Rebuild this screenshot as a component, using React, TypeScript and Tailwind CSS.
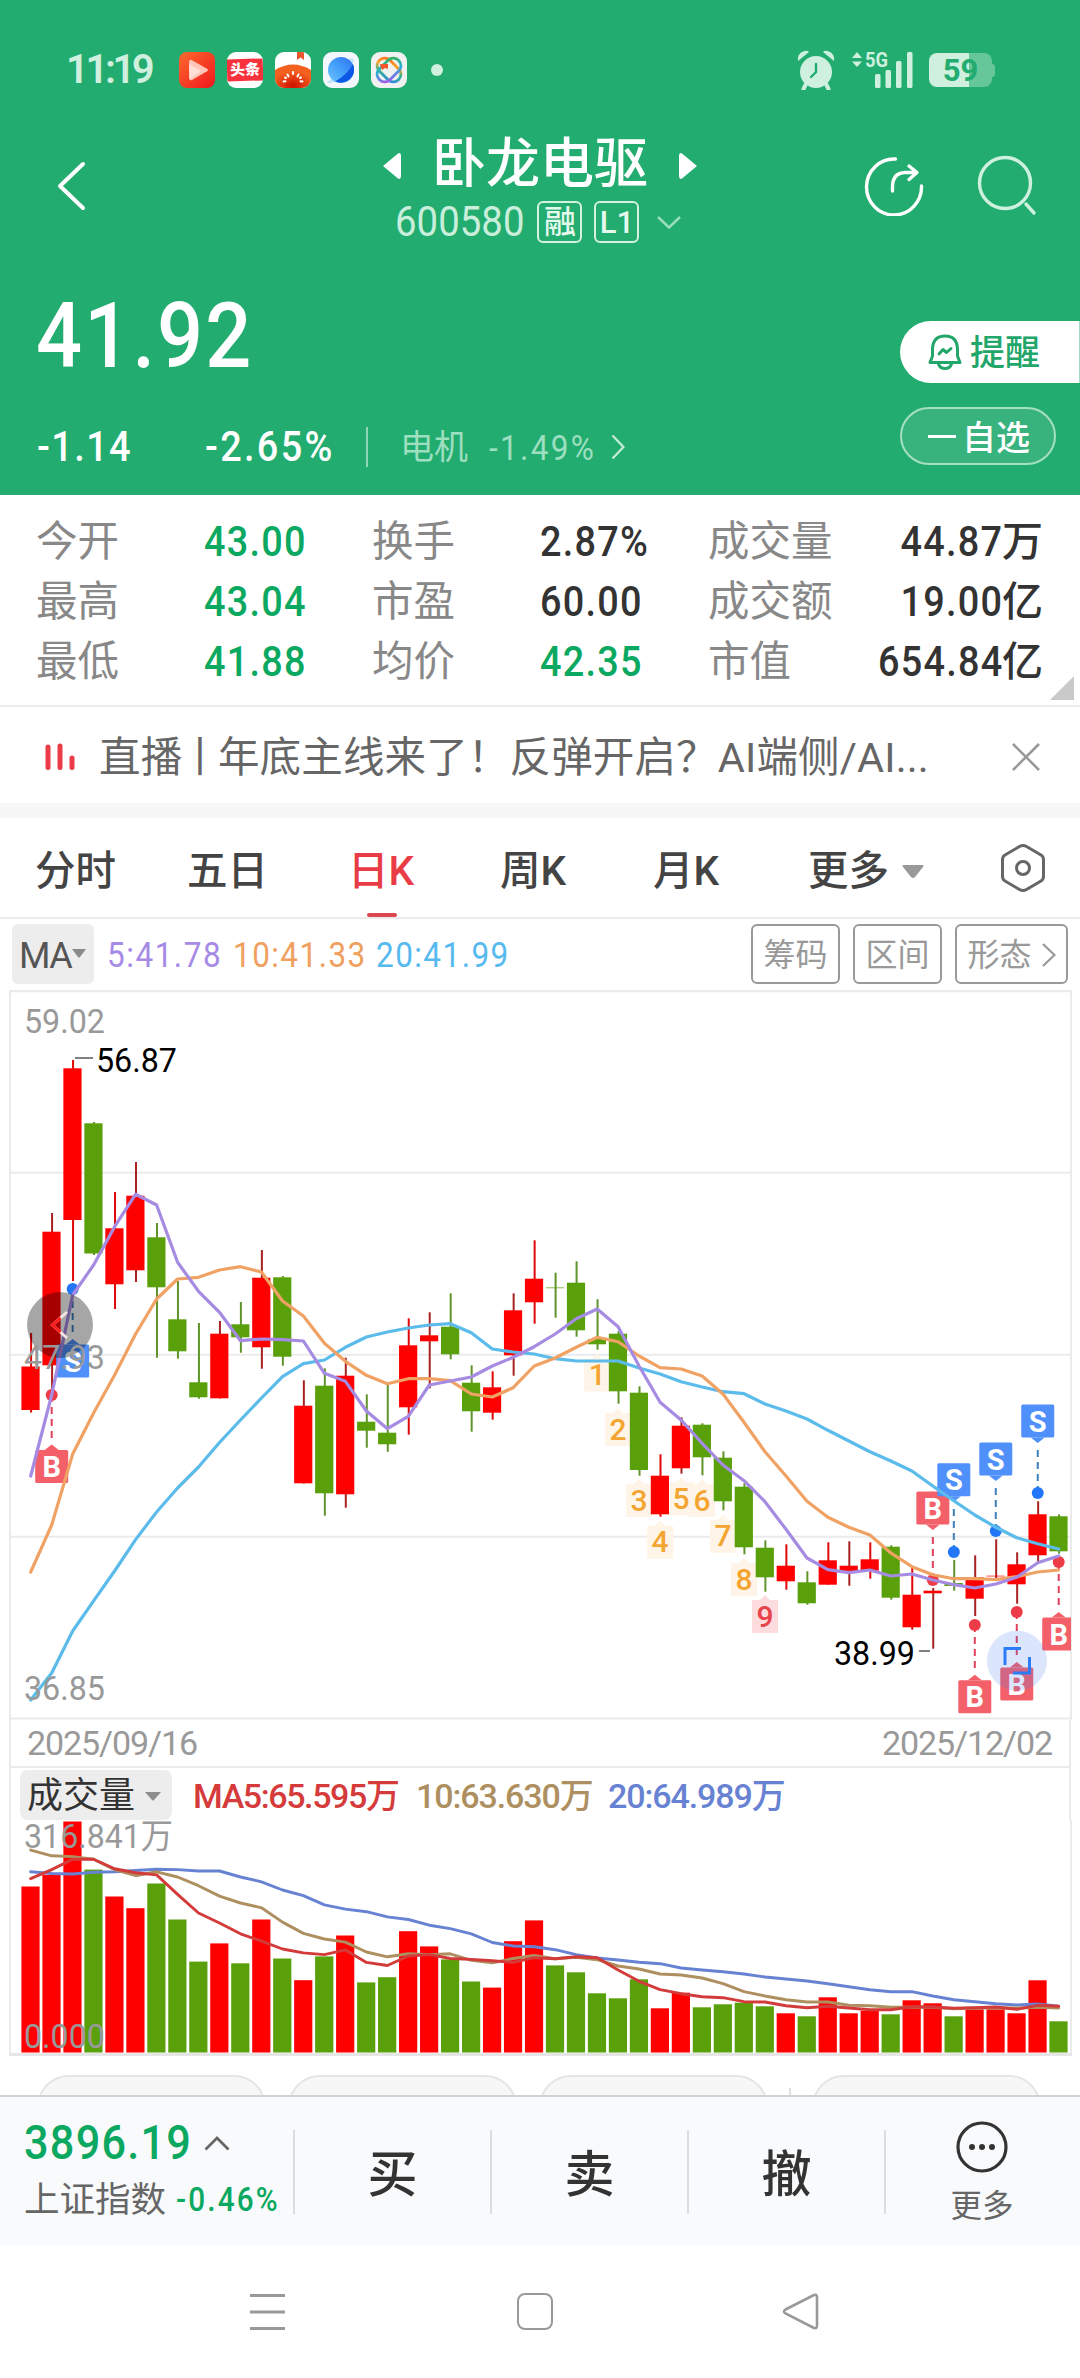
import React from "react";

const FONT = "font-['Roboto','Noto_Sans_CJK_SC',sans-serif]";
const SVG_FONT = "Roboto, 'Noto Sans CJK SC', sans-serif";

const RED = "#ff0000";
const GREEN = "#5aa00a";

/* [up, bodyTop, bodyBottom, wickTop, wickBottom, volumeTop] */
type Candle = [number, number, number, number, number, number];

const candles: Candle[] = [
  [1, 1366.5, 1410, 1333, 1412.5, 1886.5],
  [1, 1231.7, 1365.3, 1213, 1393, 1874.8],
  [1, 1068.3, 1220, 1060, 1281, 1821.5],
  [0, 1123.3, 1253.5, 1122, 1255, 1869.6],
  [1, 1228.3, 1284.3, 1192, 1309, 1896.5],
  [1, 1195.7, 1270.3, 1162, 1282, 1908.2],
  [0, 1237.3, 1287.3, 1223, 1357.7, 1883.5],
  [0, 1319.3, 1351.3, 1281, 1358.7, 1919.5],
  [0, 1382.3, 1397.3, 1323, 1398.7, 1961.6],
  [1, 1333.7, 1398.3, 1321, 1398.5, 1943.4],
  [0, 1324.3, 1337.3, 1302, 1352.7, 1963.3],
  [1, 1277.7, 1347.3, 1250, 1368.7, 1919.5],
  [0, 1277.3, 1356.7, 1276, 1365.7, 1958.5],
  [1, 1405.7, 1483.3, 1380.3, 1483.5, 1980.2],
  [0, 1385.7, 1493.3, 1368.3, 1515.7, 1956.4],
  [1, 1375.7, 1494.3, 1357.7, 1507.7, 1935.5],
  [0, 1421.7, 1430.7, 1394.3, 1447.7, 1982.4],
  [0, 1432.7, 1444.3, 1385, 1451.7, 1977.2],
  [1, 1345.3, 1407.3, 1318.3, 1434.7, 1931.2],
  [1, 1335.3, 1341.3, 1312.3, 1388.3, 1946.4],
  [0, 1326.7, 1354.3, 1293.3, 1359.3, 1959.4],
  [0, 1382.7, 1411.3, 1365.3, 1431.7, 1981.5],
  [1, 1387.3, 1412.7, 1371.3, 1419.7, 1987.6],
  [1, 1310.3, 1355.3, 1293.3, 1375.7, 1941.2],
  [1, 1278.7, 1302.3, 1240.3, 1323.7, 1920.4],
  [0, 1287, 1288.4, 1272.7, 1317.7, 1965.4],
  [0, 1282.7, 1330.3, 1261.3, 1336.7, 1972.3],
  [0, 1339, 1344.3, 1299.3, 1349.7, 1993.3],
  [0, 1333.7, 1391.3, 1331.3, 1403.7, 1998.3],
  [0, 1392.7, 1470, 1386.3, 1475.7, 1979.3],
  [1, 1475.7, 1514.3, 1454.3, 1516.7, 2008.3],
  [1, 1425.7, 1468.3, 1417.3, 1473.7, 1992.7],
  [0, 1424.7, 1457.3, 1423.3, 1475.3, 2007.3],
  [0, 1457.7, 1501.3, 1451.3, 1510.3, 2004.3],
  [0, 1486.7, 1547.3, 1483.3, 1554.3, 2002.7],
  [0, 1547.7, 1577.3, 1540.3, 1591.7, 2006.3],
  [1, 1565.7, 1581.3, 1544.3, 1589.7, 2013.3],
  [0, 1582.3, 1603.3, 1571.3, 1604.7, 2016.3],
  [1, 1560.3, 1584.7, 1542.3, 1584.7, 1997.3],
  [1, 1565.7, 1572.3, 1541.3, 1585.7, 2013.3],
  [1, 1559.3, 1570.7, 1542.3, 1578.7, 2010.7],
  [0, 1546.7, 1597.7, 1545.3, 1599.7, 2014.3],
  [1, 1594.7, 1627.3, 1566.7, 1629.7, 2000.3],
  [1, 1590.7, 1593.3, 1588, 1648.7, 2003.3],
  [0, 1583, 1586, 1560, 1590.7, 2016.3],
  [1, 1577.3, 1598.7, 1555.3, 1616, 2009.3],
  [1, 1575.4, 1576.8, 1539.3, 1578.7, 2009.3],
  [1, 1564.3, 1584.3, 1552.3, 1603.7, 2013.3],
  [1, 1514.3, 1555.3, 1501.3, 1561.7, 1980.3],
  [0, 1516.3, 1551.3, 1514.3, 1553.7, 2021.3],
];

const ma5 = [1476, 1395, 1295, 1265, 1226.7, 1194.3, 1205, 1262.3, 1291.3, 1312.3, 1340.7, 1339, 1339.7, 1341, 1373.3, 1381.3, 1411, 1428.7, 1416.3, 1385, 1381, 1377, 1366, 1357.3, 1346.7, 1334, 1318.7, 1309, 1326.7, 1366, 1402.3, 1420, 1443.3, 1465, 1480.7, 1501.7, 1529.3, 1558, 1569.7, 1572.7, 1570, 1576, 1574, 1580, 1584.7, 1588, 1584, 1577.3, 1562.7, 1556];
const ma10 = [1572, 1525, 1454, 1413, 1375, 1334, 1299, 1279, 1277.3, 1270, 1266.7, 1272, 1301, 1316, 1343.3, 1361.3, 1375.3, 1383.7, 1378.7, 1378.7, 1380.7, 1394, 1397, 1387.7, 1366, 1358, 1347.3, 1337.3, 1341.7, 1356, 1367.7, 1369, 1376, 1394, 1422.3, 1451.7, 1476, 1501.3, 1517.3, 1527.3, 1535, 1553, 1566.7, 1574.7, 1578.7, 1578.7, 1579.7, 1576.7, 1572, 1570];
const ma20 = [1700, 1673, 1631, 1600.8, 1571, 1539.6, 1512, 1488, 1467, 1442.5, 1420, 1398, 1376.7, 1363.7, 1360, 1347.3, 1337, 1332, 1328, 1325, 1323.7, 1332.7, 1349, 1352, 1354, 1358.7, 1361, 1361, 1361, 1368, 1374, 1381.7, 1387, 1391.7, 1393.7, 1404, 1411, 1419, 1430.3, 1441, 1451.7, 1461, 1471, 1486, 1500.7, 1515, 1527.3, 1537.7, 1543.7, 1549];
const vol5 = [1878.7, 1869.6, 1859.2, 1859.2, 1868.8, 1872.7, 1874.9, 1894.4, 1913, 1923, 1933.8, 1941.2, 1949, 1952.9, 1954.6, 1949.9, 1962.4, 1965.5, 1956, 1954.6, 1958.5, 1959.4, 1960.7, 1962.4, 1957.7, 1958.7, 1956.7, 1957.7, 1970, 1981.3, 1989.7, 1993.7, 1996.7, 1997.7, 2001.7, 2002, 2005.7, 2007.7, 2006.3, 2008, 2009.7, 2009.7, 2006.7, 2007, 2008.3, 2007.7, 2007, 2009.3, 2005.3, 2006.3];
const vol10 = [1850.1, 1855.8, 1856.6, 1859.2, 1869.6, 1875.7, 1871.8, 1877, 1885.7, 1896.1, 1903, 1907.8, 1922.1, 1933.4, 1939, 1942.1, 1952, 1956.8, 1953.8, 1954.6, 1953.8, 1960.3, 1962.9, 1958.5, 1955.5, 1958.7, 1957.3, 1959.7, 1966, 1969, 1974, 1975, 1978, 1983.7, 1991.7, 1996, 1999.7, 2002, 2002, 2005.3, 2005.7, 2007.3, 2007.3, 2007.3, 2008.7, 2008, 2008, 2008, 2007.3, 2008];
const vol20 = [1871.8, 1873.5, 1874, 1872.2, 1871.8, 1870.5, 1869.2, 1869.6, 1871, 1871, 1877, 1881.8, 1890, 1895.7, 1904.8, 1909.1, 1911.7, 1916.9, 1919.5, 1925.2, 1928.6, 1933.8, 1942.5, 1946, 1946.8, 1949.7, 1954.7, 1958, 1960, 1962.3, 1963.7, 1968, 1970, 1971.7, 1974, 1977, 1979, 1981, 1983.7, 1986.7, 1989.7, 1991.7, 1991.7, 1996, 1999.7, 2001.7, 2003.7, 2005, 2004, 2006.3];

const cx = (i: number) => 30.7 + 20.98 * i;
const line = (ys: number[]) => ys.map((y, i) => `${cx(i).toFixed(1)},${y}`).join(" ");

function ChartText({ x, y, w, size = 34, fill = "#999", children, weight = 400 }: { x: number; y: number; w: number; size?: number; fill?: string; weight?: number; children: string }) {
  return (
    <text x={x} y={y} fontSize={size} fill={fill} fontWeight={weight} textLength={w} lengthAdjust="spacingAndGlyphs" fontFamily={SVG_FONT}>
      {children}
    </text>
  );
}

/* Trade marker: a dot at the price, a dashed stem and a lettered tag. */
function Marker({ i, dot, box, kind }: { i: number; dot: number; box: number; kind: "B" | "S" }) {
  const x = cx(i);
  const tag = kind === "S" ? "#4f90fb" : "#f4606a";
  const below = box > dot;
  const edge = below ? box : box + 33;
  const d = below ? -1 : 1;
  return (
    <g>
      <line x1={x} x2={x} y1={dot} y2={edge + d * 10} stroke={kind === "S" ? "#3f7fb8" : "#e0405c"} strokeWidth="2" strokeDasharray="7 5" />
      <circle cx={x} cy={dot} r="6" fill={kind === "S" ? "#2276f7" : "#ee3b48"} />
      <rect x={x - 16.5} y={box} width="33" height="33" rx="1.5" fill={tag} />
      <path d={`M${x - 7} ${edge}L${x} ${edge + d * 5.5}L${x + 7} ${edge}z`} fill={tag} />
      <text x={x} y={box + 27} fontSize="29" fontWeight="700" fill="#fff" textAnchor="middle" fontFamily={SVG_FONT}>
        {kind}
      </text>
    </g>
  );
}

const counts: [number, number][] = [[27, 1374.5], [28, 1429], [29, 1500], [30, 1541.7], [31, 1498.3], [32, 1500], [33, 1535.7], [34, 1579], [35, 1616]];

function PriceChart() {
  return (
    <svg className="block" width="1080" height="730" viewBox="0 990 1080 730">
      <defs>
        <clipPath id="plot"><rect x="10" y="990" width="1061" height="730" /></clipPath>
      </defs>
      <g stroke="#ebebeb" strokeWidth="2">
        <path d="M9 991H1072" strokeWidth="2.5" />
        <path d="M10 1172.7H1071M10 1354.7H1071M10 1536.7H1071M10 1718.5H1071M10 990V1720M1071 990V1720" />
      </g>
      <ChartText x={24} y={1033} w={81}>59.02</ChartText>
      {counts.map(([i, y], n) => (
        <path key={i} d={`M${cx(i) - 13} ${y - 16}h8l5 -5l5 5h8v33h-26z`} fill={n === 8 ? "#fddcde" : "#fff4e8"} />
      ))}
      {candles.map(([up, t, b, wt, wb], i) => (
        <g key={i} fill={up ? RED : GREEN}>
          <rect x={cx(i) - 0.6} y={wt} width="2" height={wb - wt} fill={up ? (i % 2 || i > 42 ? "#a82222" : "#e00808") : "#5f942a"} />
          <rect x={cx(i) - 9.3} y={t} width="18.2" height={b - t} opacity={b - t < 2 ? 0.5 : 1} />
        </g>
      ))}
      <g clipPath="url(#plot)">
        <Marker i={1} dot={1395} box={1450} kind="B" />
        <Marker i={2} dot={1289} box={1344.5} kind="S" />
        <Marker i={43} dot={1580} box={1491.5} kind="B" />
        <Marker i={44} dot={1552} box={1463.3} kind="S" />
        <Marker i={46} dot={1531} box={1442.5} kind="S" />
        <Marker i={48} dot={1493} box={1404.5} kind="S" />
        <Marker i={45} dot={1625} box={1680.3} kind="B" />
        <Marker i={47} dot={1612} box={1667.5} kind="B" />
        <Marker i={49} dot={1562} box={1617.5} kind="B" />
      </g>
      <g fill="none" strokeWidth="3.2" strokeLinejoin="round" strokeLinecap="round">
        <polyline points={line(ma20)} stroke="#5bbbeb" />
        <polyline points={line(ma10)} stroke="#f0a264" />
        <polyline points={line(ma5)} stroke="#a58be2" />
      </g>
      {counts.map(([i, y], n) => (
        <text key={i} x={cx(i)} y={y + 10.7} fontSize="30" fontWeight="500" textAnchor="middle" fill={n === 8 ? "#e8434b" : "#f3a431"} fontFamily={SVG_FONT}>
          {n + 1}
        </text>
      ))}
      <circle cx="60" cy="1325" r="33" fill="#000" fillOpacity="0.35" />
      <path d="M67 1312L52.5 1325L67 1338" fill="none" stroke="#f3e3e3" strokeWidth="3" />
      <path d="M60.5 1317.8L52.5 1325L60.5 1332.2" fill="none" stroke="#ff1c1c" strokeWidth="3" />
      <ChartText x={24} y={1369} w={81}>47.93</ChartText>
      <ChartText x={24} y={1700} w={81}>36.85</ChartText>
      <path d="M75 1058H93M919 1651H930" stroke="#808080" strokeWidth="2" />
      <ChartText x={96} y={1072} w={81} fill="#000">56.87</ChartText>
      <ChartText x={834} y={1665} w={81} fill="#000">38.99</ChartText>
      <circle cx="1017" cy="1660.7" r="30" fill="#4a7df0" fillOpacity="0.2" />
      <path d="M1021 1648.5H1005V1665M1013 1673H1029.500V1657" fill="none" stroke="#2b7cf5" strokeWidth="3" />
    </svg>
  );
}

function VolumeChart() {
  return (
    <svg className="block overflow-visible" width="1080" height="236" viewBox="0 1820 1080 236">
      <path d="M10 1820V2055M1071 1820V2055" stroke="#ebebeb" strokeWidth="2" />
      <path d="M9 2054.500H1072" stroke="#e6e6e6" strokeWidth="3" />
      {candles.map(([up, , , , , v], i) => (
        <rect key={i} x={cx(i) - 9.3} y={v} width="18.2" height={2052.5 - v} fill={up ? RED : GREEN} />
      ))}
      <g fill="none" strokeWidth="2.9" strokeLinejoin="round" strokeLinecap="round">
        <polyline points={line(vol20)} stroke="#6782d2" />
        <polyline points={line(vol10)} stroke="#ae8f5f" />
        <polyline points={line(vol5)} stroke="#d33a3a" />
      </g>
      <ChartText x={24} y={1848} w={149}>316.841万</ChartText>
      <ChartText x={24} y={2048} w={81}>0.000</ChartText>
    </svg>
  );
}

function StatusBar() {
  return (
    <div className="flex h-[36px] items-center text-[#cfefdf]">
      <span className="ml-[66px] w-[113px] text-[40px] leading-[36px] font-semibold tracking-[-3.4px]">11:19</span>
      <div className="flex gap-[12px]">
        <svg width="36" height="36" viewBox="0 0 36 36">
          <defs><linearGradient id="vid" x1="0" y1="0" x2="1" y2="1"><stop offset="0" stopColor="#fb6a2e" /><stop offset="1" stopColor="#f0161c" /></linearGradient></defs>
          <rect width="36" height="36" rx="8" fill="url(#vid)" />
          <path d="M10 9.500Q10.500 7 13 8.200L28 16.800Q30 18 28 19.200L13 28Q10.500 29 10 26.500z" fill="#ffc5b8" />
          <path d="M10 12L22 19L11 27z" fill="#ffded6" />
        </svg>
        <div className="flex h-[36px] w-[36px] items-center overflow-hidden rounded-[9px] bg-white">
          <div className="flex h-[22px] w-[36px] -rotate-2 items-center justify-center bg-[#f8323c] text-[15px] leading-none font-black text-white">头条</div>
        </div>
        <svg width="36" height="36" viewBox="0 0 36 36">
          <defs>
            <clipPath id="tom"><rect width="36" height="36" rx="9" /></clipPath>
            <radialGradient id="tomg" cx="0.5" cy="0.9" r="0.6"><stop offset="0" stopColor="#cf0f02" /><stop offset="1" stopColor="#f4601f" /></radialGradient>
          </defs>
          <g clipPath="url(#tom)">
            <rect width="36" height="36" fill="#fff" />
            <path d="M0 18Q18 7 36 18V36H0z" fill="url(#tomg)" />
            <path d="M22 0h7v8l-3.500-2.500L22 8z" fill="#e8572c" />
            <g stroke="#fff" strokeWidth="2" strokeLinecap="round"><path d="M18 20v2M12.500 22.500l1 2M23.500 22.500l-1 2M8.500 29.500l2-.2M27.500 29.500l-2-.2M10 25.500l1 .5M26 25.500l-1 .5" /></g>
          </g>
        </svg>
        <svg width="36" height="36" viewBox="0 0 36 36">
          <defs><linearGradient id="pl" x1="1" y1="0" x2="0" y2="1"><stop offset="0" stopColor="#2e6ff2" /><stop offset="0.5" stopColor="#429ff9" /><stop offset="1" stopColor="#6dc6ff" /></linearGradient></defs>
          <rect width="36" height="36" rx="9" fill="#f3f7fb" />
          <path d="M6 29Q3 31 6 31Q12 32 24 20Q32 10 30.500 7Q29 5 25 8z" fill="#bfe4fb" />
          <circle cx="18" cy="18" r="13" fill="url(#pl)" />
          <path d="M12 29.500Q24 23 30 12Q33 20 28 26Q21 33 12 29.500z" fill="#0c58e4" />
        </svg>
        <svg width="36" height="36" viewBox="0 0 36 36">
          <defs><linearGradient id="kn" x1="0" y1="0" x2="1" y2="1"><stop offset="0" stopColor="#ff6a2a" /><stop offset="0.35" stopColor="#f7a325" /><stop offset="0.6" stopColor="#33b58b" /><stop offset="1" stopColor="#2f7df0" /></linearGradient>
            <linearGradient id="kn2" x1="1" y1="0" x2="0" y2="1"><stop offset="0" stopColor="#35b24a" /><stop offset="0.5" stopColor="#2bb0d8" /><stop offset="1" stopColor="#b04df0" /></linearGradient></defs>
          <rect width="36" height="36" rx="9" fill="#f1f1f1" />
          <rect x="4.500" y="10.500" width="27" height="15" rx="7" transform="rotate(45 18 18)" fill="none" stroke="url(#kn)" strokeWidth="2.800" />
          <rect x="4.500" y="10.500" width="27" height="15" rx="7" transform="rotate(-45 18 18)" fill="none" stroke="url(#kn2)" strokeWidth="2.800" />
          <path d="M9 12h8v5l-3-1-3 2z" fill="#f2552c" />
        </svg>
      </div>
      <span className="ml-[24px] h-[12px] w-[12px] rounded-full bg-[#cfefdf]" />
      <svg className="ml-[354px]" width="38" height="40" viewBox="0 0 38 40" fill="#cfefdf">
        <circle cx="19" cy="22" r="16" />
        <path d="M1 11Q0 4 6 1.500Q10 0 12 2zM37 11Q38 4 32 1.500Q28 0 26 2z" />
        <path d="M9 34l-2.500 5M29 34l2.500 5" stroke="#cfefdf" strokeWidth="4" strokeLinecap="round" />
        <path d="M19 14v8l-5 5" fill="none" stroke="#22ac6f" strokeWidth="2.400" strokeLinecap="round" />
      </svg>
      <svg className="ml-[16px] overflow-visible" width="64" height="38" viewBox="0 0 64 38" fill="#cfefdf">
        <path d="M1 7L6 1l5 6zM1 10.500h10L6 16z" />
        <text x="14" y="16" fontSize="21" fontWeight="700" textLength="23" lengthAdjust="spacingAndGlyphs" fontFamily={SVG_FONT}>5G</text>
        <rect x="24" y="23" width="5.500" height="14" rx="1.500" />
        <rect x="34.500" y="19" width="5.500" height="18" rx="1.500" />
        <rect x="45" y="10" width="5.500" height="27" rx="1.500" />
        <rect x="56" y="1" width="5.500" height="36" rx="1.500" />
      </svg>
      <div className="ml-[14px] flex items-center">
        <div className="flex h-[34px] w-[63px] items-center justify-center rounded-[8px] bg-[linear-gradient(90deg,#cfefdf_0_63%,#66c79b_63%)] text-[31px] leading-none font-bold text-[#22ac6f]">59</div>
        <span className="h-[13px] w-[3px] rounded-r-[3px] bg-[#66c79b]" />
      </div>
    </div>
  );
}

function TitleBar() {
  return (
    <div className="mt-[34px] flex h-[132px]">
      <div className="w-[300px]">
        <svg className="mt-[38px] ml-[56px]" width="32" height="52" viewBox="0 0 32 52" fill="none" stroke="#fff" strokeWidth="4" strokeLinecap="round" strokeLinejoin="round"><path d="M27 4L4 26L27 48" /></svg>
      </div>
      <div className="flex w-[480px] flex-col items-center">
        <div className="mt-[15px] flex h-[64px] items-center text-white">
          <svg className="-mt-[6px]" width="18" height="28" viewBox="0 0 18 28" fill="#fff"><path d="M0 14L15 1.500Q18 0 18 4V24Q18 28 15 26.500z" /></svg>
          <span className="-mt-[8px] mr-[31px] ml-[31px] text-[54px] leading-[64px] font-medium">卧龙电驱</span>
          <svg className="-mt-[6px]" width="18" height="28" viewBox="0 0 18 28" fill="#fff"><path d="M18 14L3 1.500Q0 0 0 4V24Q0 28 3 26.500z" /></svg>
        </div>
        <div className="-ml-[4px] flex h-[42px] items-center text-[#c9efdc]">
          <span className="-mr-[1px] origin-left scale-x-90 text-[42.5px] leading-[42px] tracking-[0.1px]">600580</span>
          <span className="flex h-[42px] w-[45px] items-center justify-center rounded-[6px] border-2 border-[#d3f2e2] text-[32px] leading-none font-medium text-[#e4f8ee]">融</span>
          <span className="ml-[12px] flex h-[42px] w-[45px] items-center justify-center rounded-[6px] border-2 border-[#d3f2e2] text-[31px] leading-none font-medium text-[#e4f8ee]">L1</span>
          <svg className="ml-[18px]" width="24" height="13" viewBox="0 0 24 13" fill="none" stroke="#9addbd" strokeWidth="2.500"><path d="M1 1L12 11.500L23 1" /></svg>
        </div>
      </div>
      <div className="flex w-[300px] pt-[32px]">
        <svg className="ml-[84px]" width="62" height="62" viewBox="0 0 62 62" fill="none" stroke="#fff" strokeWidth="3.400" strokeLinecap="round" strokeLinejoin="round">
          <path d="M31.500 5A27.500 28 0 1 0 57.500 32" />
          <path d="M28.500 37V33Q28.500 19 41 18.500H52M45 12L53 18.500L45 25.500" />
        </svg>
        <svg className="ml-[51px]" width="62" height="62" viewBox="0 0 62 62" fill="none" stroke="#cdf0df" strokeWidth="3.400" strokeLinecap="round"><circle cx="28" cy="29" r="25.500" /><path d="M49 50L57 59" /></svg>
      </div>
    </div>
  );
}

function PriceHeader() {
  return (
    <div className="flex h-[241px] justify-between text-white">
      <div>
        <div className="mt-[33px] ml-[36px] h-[100px] w-[260px] origin-left scale-x-90 text-[90px] leading-[100px] font-medium tracking-[2.4px]">41.92</div>
        <div className="mt-[38px] flex h-[44px] items-center text-[42px] leading-[44px] font-medium">
          <span className="ml-[37px] w-[168px]"><span className="inline-block origin-left scale-x-90 tracking-[1.6px]">-1.14</span></span>
          <span className="w-[161px]"><span className="inline-block origin-left scale-x-90 tracking-[2.6px]">-2.65%</span></span>
          <span className="h-[40px] w-[2px] bg-white/50" />
          <span className="ml-[32px] w-[89px] text-[34px] font-normal text-[#9ddfc0]">电机</span>
          <span className="w-[122px]"><span className="inline-block origin-left scale-x-90 text-[35px] font-normal tracking-[2.6px] text-[#9ddfc0]">-1.49%</span></span>
          <svg width="14" height="26" viewBox="0 0 14 26" fill="none" stroke="#c4ecd8" strokeWidth="2.300"><path d="M1.500 1.500L12.500 13L1.500 24.500" /></svg>
        </div>
      </div>
      <div className="w-[180px] pt-[67px]">
        <div className="flex h-[62px] items-center rounded-l-full border-r border-[#a0dcc0] bg-white pl-[28px] text-[#22a66a]">
          <svg width="34" height="36" viewBox="0 0 34 36" fill="none" stroke="#22a66a" strokeWidth="3" strokeLinecap="round" strokeLinejoin="round">
            <path d="M4.500 22V15Q5 2 17 2Q29 2 29.500 15V22L32 28.500H2z" /><path d="M10.500 30Q12 34.500 17 34.500Q22 34.500 23.500 30M11 20L15 15.500L18.500 18.500L23 14.500" />
          </svg>
          <span className="mt-[3px] ml-[8px] text-[35px] leading-none font-medium">提醒</span>
        </div>
        <div className="mt-[24px] flex h-[58px] w-[156px] items-center rounded-full border-2 border-[#a5dfc4] bg-[#38b37d] pl-[26px] text-[34px] leading-none font-medium">
          <span className="mr-[6px] h-[3px] w-[28px] bg-white" /><span className="mt-[4px]">自选</span>
        </div>
      </div>
    </div>
  );
}

const rows: [string, string, string, string, string, string, string, boolean][] = [
  ["今开", "43.00", "换手", "2.87%", "成交量", "44.87", "万", false],
  ["最高", "43.04", "市盈", "60.00", "成交额", "19.00", "亿", false],
  ["最低", "41.88", "均价", "42.35", "市值", "654.84", "亿", true],
];

function Quotes() {
  const num = "inline-block origin-left scale-x-90 font-medium tracking-[1.4px]";
  return (
    <div className="relative h-[212px] border-b-2 border-[#ececec] pt-[17px]">
      {rows.map((r) => (
        <div key={r[0]} className="flex h-[60px] items-center pr-[37px] pl-[36px] text-[42px] leading-[60px] text-[#333]">
          <span className="w-[168px] text-[41.5px] text-[#888]">{r[0]}</span>
          <span className="w-[168px] text-[#0aa860]"><span className={num}>{r[1]}</span></span>
          <span className="w-[168px] text-[41.5px] text-[#888]">{r[2]}</span>
          <span className={r[7] ? "w-[168px] text-[#0aa860]" : "w-[168px]"}><span className={num}>{r[3]}</span></span>
          <span className="text-[41.5px] text-[#888]">{r[4]}</span>
          <span className="ml-auto origin-right scale-x-90 font-medium tracking-[1.4px]">{r[5]}</span>
          <span className="-ml-[1px] text-[41px] font-medium">{r[6]}</span>
        </div>
      ))}
      <svg className="absolute right-[6px] bottom-[5px]" width="24" height="24" viewBox="0 0 24 24"><path d="M24 0V24H0z" fill="#c9c9c9" /></svg>
    </div>
  );
}

function News() {
  return (
    <div className="flex h-[96px] items-center pt-[4px] pb-0">
      <svg className="ml-[45px]" width="31" height="28" viewBox="0 0 31 28" stroke="#ea3d48" strokeWidth="5" strokeLinecap="round"><path d="M3 4V24.500M15 3V24.500M27 15V24.500" /></svg>
      <span className="mt-[2px] ml-[23px] w-[857px] text-[41.5px] leading-[60px] tracking-[0.15px] whitespace-nowrap text-[#666]">直播<span className="-mx-[3px]">丨</span>年底主线来了！反弹开启？AI端侧/AI...</span>
      <svg className="ml-[56px]" width="28" height="28" viewBox="0 0 28 28" stroke="#999" strokeWidth="2.600"><path d="M1 1L27 27M27 1L1 27" /></svg>
    </div>
  );
}

function Tabs() {
  return (
    <div className="relative flex h-[101px] items-center border-b-2 border-[#ebebeb] pt-[7px] text-[40.5px] leading-[60px] font-medium text-[#444]">
      <span className="ml-[35px] w-[152px]">分时</span>
      <span className="w-[161px]">五日</span>
      <span className="w-[152px] text-[#e93c47]">日K</span>
      <span className="w-[153px]">周K</span>
      <span className="w-[155px]">月K</span>
      <span>更多</span>
      <svg className="ml-[13px]" width="22" height="13" viewBox="0 0 22 13" fill="#999"><path d="M1 0H21Q22 1 21 2L13 12Q11 14 9 12L1 2Q0 1 1 0z" /></svg>
      <svg className="ml-[76px] -mt-[6px]" width="46" height="50" viewBox="0 0 46 50" fill="none" stroke="#666" strokeWidth="3" strokeLinejoin="round"><path d="M19.500 3.500Q23 1.500 26.500 3.500L41 12Q43.500 13.500 43.500 16.500V33.500Q43.500 36.500 41 38L26.500 46.500Q23 48.500 19.500 46.500L5 38Q2.500 36.500 2.500 33.500V16.500Q2.500 13.500 5 12z" /><circle cx="23" cy="25" r="6.500" /></svg>
      <span className="absolute bottom-0 left-[367px] h-[4px] w-[30px] rounded-full bg-[#dc4650]" />
    </div>
  );
}

function Indicators() {
  const btn = "flex h-[60px] items-center justify-center rounded-[6px] border-2 border-[#999] pt-[2px]";
  return (
    <div className="flex h-[71px] items-start pt-[5px] text-[35px] leading-[60px]">
      <div className="ml-[12px] flex h-[60px] w-[82px] items-center rounded-[6px] bg-[#ededed] pt-[3px] pl-[7px] text-[36px] text-[#555]">
        <span className="w-[53px] tracking-[-1.6px]">MA</span>
        <svg className="-mt-[4px]" width="14" height="9" viewBox="0 0 14 9" fill="#8a8a8a"><path d="M0 0H14L8 8Q7 9 6 8z" /></svg>
      </div>
      <div className="ml-[13px] flex pt-[2px]">
        <span className="w-[126px] origin-left scale-x-90 tracking-[1.7px] text-[#a58ae6]">5:41.78</span>
        <span className="w-[143px] origin-left scale-x-90 tracking-[1.6px] text-[#f0a05e]">10:41.33</span>
        <span className="origin-left scale-x-90 tracking-[1.6px] text-[#56baef]">20:41.99</span>
      </div>
      <div className="mr-[12px] ml-auto flex gap-[13px] text-[32px] text-[#999]">
        <div className={`${btn} w-[89px]`}>筹码</div>
        <div className={`${btn} w-[89px]`}>区间</div>
        <div className={`${btn} w-[113px]`}>形态<svg className="ml-[10px]" width="14" height="24" viewBox="0 0 14 24" fill="none" stroke="#999" strokeWidth="2.200"><path d="M1 1L12.500 12L1 23" /></svg></div>
      </div>
    </div>
  );
}

function BottomBar() {
  return (
    <div className="relative flex h-[151px] items-center border-t-2 border-[#d2d2d5] bg-[#f9fafc]">
      <div className="h-full w-[293px] pl-[24px]">
        <div className="mt-[20px] flex h-[52px] items-center text-[48px] leading-[52px] font-medium text-[#0aa860]">
          <span className="w-[180px] origin-left scale-x-90 tracking-[1.4px]">3896.19</span>
          <svg width="26" height="15" viewBox="0 0 26 15" fill="none" stroke="#666" strokeWidth="2.800"><path d="M1.500 13.500L13 2L24.500 13.500" /></svg>
        </div>
        <div className="mt-[7px] flex h-[48px] items-center text-[35.5px] leading-[48px] whitespace-nowrap text-[#666]">
          上证指数<span className="ml-[10px] origin-left scale-x-90 text-[33px] font-medium tracking-[2.4px] text-[#0aa860]">-0.46%</span>
        </div>
      </div>
      {["买", "卖", "撤"].map((t) => (
        <div key={t} className="flex h-[84px] w-[197px] items-center justify-center border-l-2 border-[#dcdcde] pt-[7px] text-[50px] leading-none font-medium text-[#333]">{t}</div>
      ))}
      <div className="flex h-[84px] flex-1 flex-col items-center border-l-2 border-[#dcdcde] pr-[2px]">
        <svg className="-mt-[9px] h-[52px] w-[52px] shrink-0" viewBox="0 0 52 52" fill="none" stroke="#333" strokeWidth="3.200"><circle cx="26" cy="26" r="24" /><g fill="#333" stroke="none"><circle cx="16" cy="26" r="3" /><circle cx="26" cy="26" r="3" /><circle cx="36" cy="26" r="3" /></g></svg>
        <span className="mt-[14px] text-[31.5px] leading-[40px] text-[#666]">更多</span>
      </div>
    </div>
  );
}

export default function App() {
  const pill = "h-[64px] w-[229px] shrink-0 rounded-full border-2 border-[#e5e5e5] bg-[#f7f7f7]";
  return (
    <div className={`${FONT} h-[2378px] w-[1080px] overflow-hidden bg-white`}>
      <header className="h-[495px] bg-[#22ac6f] pt-[52px]">
        <StatusBar />
        <TitleBar />
        <PriceHeader />
      </header>
      <Quotes />
      <News />
      <div className="h-[15px] bg-[#f7f7f7]" />
      <Tabs />
      <Indicators />
      <PriceChart />
      <div className="mx-[9px] flex h-[46px] items-center justify-between border-x-2 border-[#ebebeb] pr-[17px] pl-[16px] text-[34px] leading-[44px] text-[#999]">
        <span className="tracking-[-1.1px]">2025/09/16</span>
        <span className="tracking-[-1.1px]">2025/12/02</span>
      </div>
      <div className="mx-[9px] flex h-[54px] items-center border-x-2 border-t-2 border-[#ebebeb] pt-[2px] text-[34px] leading-[50px]">
        <div className="ml-[9px] flex h-[50px] w-[152px] items-center rounded-[8px] bg-[#ededed] pt-[2px] pl-[7px] text-[36px] text-[#333]">
          成交量
          <svg className="ml-[10px]" width="16" height="9" viewBox="0 0 16 9" fill="#8e8e8e"><path d="M0 0H16L9 8Q8 9 7 8z" /></svg>
        </div>
        <span className="mt-[2px] ml-[21px] w-[223px] font-medium tracking-[-1.4px] text-[#d63b3b]">MA5:65.595万</span>
        <span className="mt-[2px] w-[192px] font-medium tracking-[-1.1px] text-[#ae8f5f]">10:63.630万</span>
        <span className="mt-[2px] font-medium tracking-[-1.1px] text-[#6782d2]">20:64.989万</span>
      </div>
      <VolumeChart />
      <div className="flex h-[39px] gap-[22px] overflow-hidden pt-[19px] pl-[37px]">
        <div className={pill} />
        <div className={pill} />
        <div className={pill} />
        <span className="-mx-[1px] mt-[13px] h-[40px] w-[2px] shrink-0 bg-[#e0e0e0]" />
        <div className={pill} />
      </div>
      <BottomBar />
      <nav className="flex h-[132px] items-start pt-[47px]">
        <svg className="ml-[249px]" width="38" height="38" viewBox="0 0 38 38" stroke="#999" strokeWidth="3"><path d="M1 2.500H36M1 19H36M1 35.500H36" /></svg>
        <div className="ml-[230px] h-[37px] w-[36px] rounded-[8px] border-[2.5px] border-[#999]" />
        <svg className="ml-[229px]" width="38" height="38" viewBox="0 0 38 38" fill="none" stroke="#999" strokeWidth="2.600"><path d="M3.500 16.500L31 2.500Q35 0.500 35 4.500V32.500Q35 36.500 31 34.500L3.500 20.500Q0.500 18.500 3.500 16.500z" /></svg>
      </nav>
    </div>
  );
}
